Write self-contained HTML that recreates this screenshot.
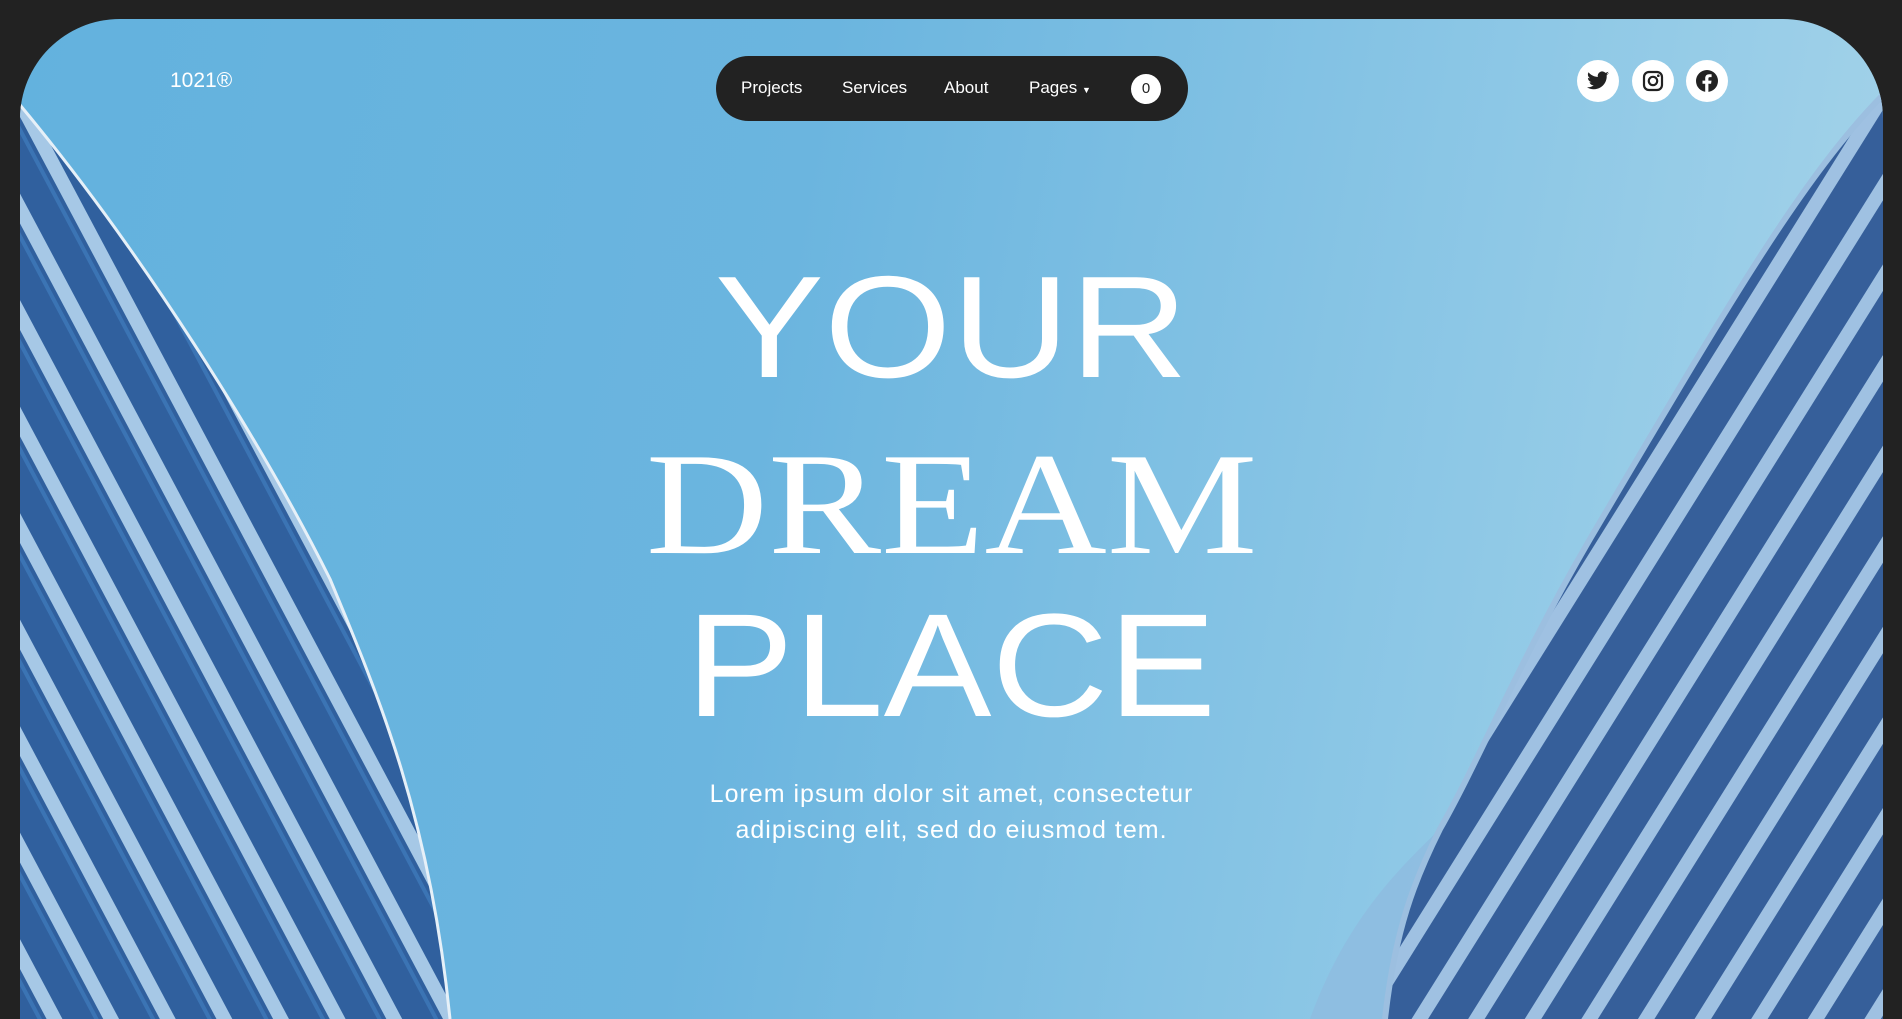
<!DOCTYPE html>
<html><head><meta charset="utf-8"><style>
html,body{margin:0;padding:0;background:#222;width:1902px;height:938px;overflow:hidden}
.card{position:absolute;left:20px;top:19px;width:1863px;height:1000px;border-radius:100px 100px 0 0;overflow:hidden;background:linear-gradient(100deg,#63b2de 0%,#6bb5df 40%,#8ec8e6 75%,#a8d5ea 100%)}
svg.bg{position:absolute;left:0;top:0}
.logo{position:absolute;left:150px;top:50px;color:#fff;font:21px "Liberation Sans",sans-serif}
.nav{position:absolute;left:696px;top:37px;width:472px;height:65px;border-radius:33px;background:#222;color:#fff;font:17px "Liberation Sans",sans-serif}
.nav span{position:absolute;top:22px}
.cnt{position:absolute;left:415px;top:18px;width:30px;height:30px;border-radius:50%;background:#fff;color:#222;font-size:15px;text-align:center;line-height:30px}
.soc{position:absolute;top:41px;width:42px;height:42px;border-radius:50%;background:#fff}
.soc svg{position:absolute;left:9px;top:9px}
.h{position:absolute;left:0;width:1863px;text-align:center;color:#fff;line-height:1}
.h span{display:inline-block}
.sub{position:absolute;left:0;width:1863px;top:757px;text-align:center;color:#fff;font:25px/36px "Liberation Sans",sans-serif;letter-spacing:1px}
</style></head><body>
<div class="card">
<svg class="bg" width="1863" height="1000" viewBox="0 0 1863 1000">
<defs>
<pattern id="pl" width="50" height="50" patternUnits="userSpaceOnUse" patternTransform="rotate(62)">
<rect width="50" height="50" fill="#30609e"/><rect y="32" width="50" height="14" fill="#a6c8e6"/><rect y="0" width="50" height="4" fill="#3b74b4"/>
</pattern>
<pattern id="pr" width="48" height="48" patternUnits="userSpaceOnUse" patternTransform="rotate(-58)">
<rect width="48" height="48" fill="#365f9a"/><rect y="30" width="48" height="14" fill="#9fc1e2"/>
</pattern>
</defs>
<path d="M0 86 C120 230 240 420 310 560 C360 680 410 800 430 1000 L0 1000 Z" fill="url(#pl)"/>
<path d="M0 86 C120 230 240 420 310 560 C360 680 410 800 430 1000" fill="none" stroke="#e6f0f8" stroke-width="3"/>
<path d="M1430 800 C1390 840 1330 890 1290 1000 L1380 1000 Z" fill="#8fbbe0" opacity="0.8"/>
<path d="M1863 76 C1780 160 1700 300 1570 520 C1500 640 1460 740 1420 810 C1395 860 1375 910 1365 1000 L1863 1000 Z" fill="url(#pr)"/>
<path d="M1863 76 C1780 160 1700 300 1570 520 C1500 640 1460 740 1420 810 C1395 860 1375 910 1365 1000" fill="none" stroke="#9cbfe0" stroke-width="6"/>
</svg>
<div class="logo">1021®</div>
<div class="nav">
<span style="left:25px">Projects</span><span style="left:126px">Services</span><span style="left:228px">About</span><span style="left:313px">Pages <small style="font-size:9px">▼</small></span>
<div class="cnt">0</div>
</div>
<div class="soc" style="left:1557px"><svg width="24" height="24" viewBox="0 0 24 24"><path fill="#222" d="M23 4.6c-.8.4-1.7.6-2.6.7.9-.6 1.6-1.4 2-2.5-.9.5-1.9.9-2.9 1.1a4.5 4.5 0 0 0-7.7 4.1C8 7.8 4.7 6 2.5 3.3a4.5 4.5 0 0 0 1.4 6c-.7 0-1.4-.2-2-.6 0 2.2 1.6 4 3.6 4.4-.7.2-1.4.2-2 .1.6 1.8 2.2 3.1 4.2 3.1A9 9 0 0 1 1 18.2 12.8 12.8 0 0 0 20.7 6.8V6.2c.9-.6 1.7-1.4 2.3-2.3z"/></svg></div>
<div class="soc" style="left:1612px"><svg width="24" height="24" viewBox="0 0 24 24"><rect x="3" y="3" width="18" height="18" rx="5" fill="none" stroke="#222" stroke-width="2.2"/><circle cx="12" cy="12" r="4.2" fill="none" stroke="#222" stroke-width="2.2"/><circle cx="17.3" cy="6.7" r="1.3" fill="#222"/></svg></div>
<div class="soc" style="left:1666px"><svg width="24" height="24" viewBox="0 0 24 24"><circle cx="12" cy="12" r="11" fill="#222"/><path fill="#fff" d="M13.4 23v-8.2h2.7l.4-3.2h-3.1V9.6c0-.9.3-1.5 1.6-1.5h1.6V5.3c-.3 0-1.3-.1-2.4-.1-2.4 0-4 1.4-4 4.1v2.3H7.5v3.2h2.7V23z"/></svg></div>
<div class="h" style="top:225px;font:145px 'Liberation Sans',sans-serif"><span style="transform:scaleX(1.13)">YOUR</span></div>
<div class="h" style="top:401px;font:146px 'Liberation Serif',serif"><span style="transform:scaleX(1.16)">DREAM</span></div>
<div class="h" style="top:563px;font:147px 'Liberation Sans',sans-serif"><span style="transform:scaleX(1.1)">PLACE</span></div>
<div class="sub">Lorem ipsum dolor sit amet, consectetur<br>adipiscing elit, sed do eiusmod tem.</div>
</div>
</body></html>
